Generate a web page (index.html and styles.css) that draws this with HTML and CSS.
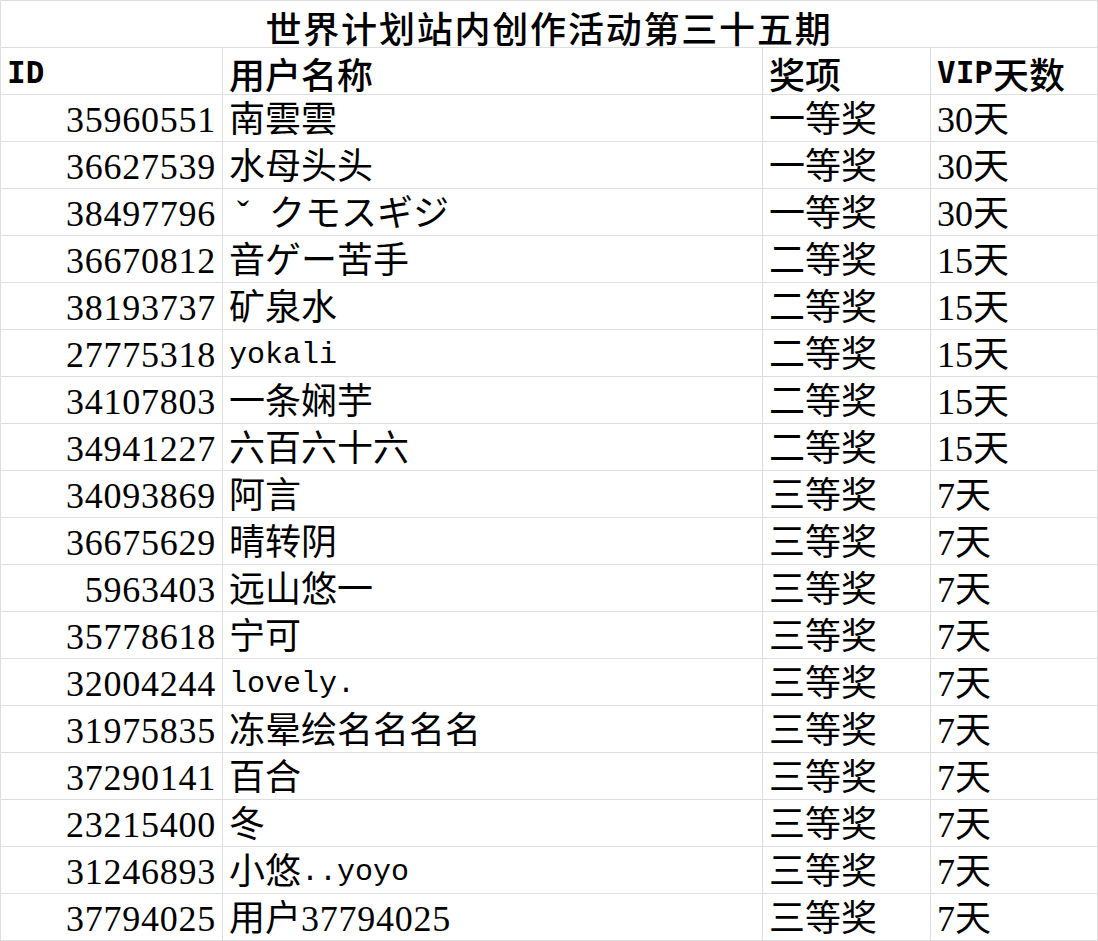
FILE: index.html
```html
<!DOCTYPE html>
<html lang="zh">
<head>
<meta charset="utf-8">
<title>世界计划站内创作活动第三十五期</title>
<link rel="stylesheet" href="styles.css">
</head>
<body>
<div class="sheet">
  <div class="cell title">世界计划站内创作活动第三十五期</div>

  <div class="cell head"><span class="hm">ID</span></div>
  <div class="cell head">用户名称</div>
  <div class="cell head">奖项</div>
  <div class="cell head"><span class="hm">VIP</span>天数</div>

  <div class="cell num">35960551</div><div class="cell">南雲雲</div><div class="cell">一等奖</div><div class="cell">30天</div>
  <div class="cell num">36627539</div><div class="cell">水母头头</div><div class="cell">一等奖</div><div class="cell">30天</div>
  <div class="cell num">38497796</div><div class="cell"><span class="caron">ˇ</span>クモスギジ</div><div class="cell">一等奖</div><div class="cell">30天</div>
  <div class="cell num">36670812</div><div class="cell">音ゲー苦手</div><div class="cell">二等奖</div><div class="cell">15天</div>
  <div class="cell num">38193737</div><div class="cell">矿泉水</div><div class="cell">二等奖</div><div class="cell">15天</div>
  <div class="cell num">27775318</div><div class="cell"><span class="mono">yokali</span></div><div class="cell">二等奖</div><div class="cell">15天</div>
  <div class="cell num">34107803</div><div class="cell">一条娴芋</div><div class="cell">二等奖</div><div class="cell">15天</div>
  <div class="cell num">34941227</div><div class="cell">六百六十六</div><div class="cell">二等奖</div><div class="cell">15天</div>
  <div class="cell num">34093869</div><div class="cell">阿言</div><div class="cell">三等奖</div><div class="cell">7天</div>
  <div class="cell num">36675629</div><div class="cell">晴转阴</div><div class="cell">三等奖</div><div class="cell">7天</div>
  <div class="cell num">5963403</div><div class="cell">远山悠一</div><div class="cell">三等奖</div><div class="cell">7天</div>
  <div class="cell num">35778618</div><div class="cell">宁可</div><div class="cell">三等奖</div><div class="cell">7天</div>
  <div class="cell num">32004244</div><div class="cell"><span class="mono">lovely.</span></div><div class="cell">三等奖</div><div class="cell">7天</div>
  <div class="cell num">31975835</div><div class="cell">冻晕绘名名名名</div><div class="cell">三等奖</div><div class="cell">7天</div>
  <div class="cell num">37290141</div><div class="cell">百合</div><div class="cell">三等奖</div><div class="cell">7天</div>
  <div class="cell num">23215400</div><div class="cell">冬</div><div class="cell">三等奖</div><div class="cell">7天</div>
  <div class="cell num">31246893</div><div class="cell">小悠<span class="mono">..yoyo</span></div><div class="cell">三等奖</div><div class="cell">7天</div>
  <div class="cell num">37794025</div><div class="cell">用户<span class="dig">37794025</span></div><div class="cell">三等奖</div><div class="cell">7天</div>
</div>
</body>
</html>
```

FILE: styles.css
```css
html, body {
  margin: 0;
  padding: 0;
  background: #ffffff;
}

.sheet {
  display: grid;
  grid-template-columns: 222px 540px 168px 167px;
  grid-auto-rows: 47px;
  width: 1097px;
  border-right: 1px solid #dedede;
  border-bottom: 1px solid #dedede;
  box-sizing: content-box;
  color: #000;
  font-family: "Liberation Serif", "Noto Sans CJK SC", serif;
  font-size: 36px;
}

.cell {
  box-sizing: border-box;
  border-top: 1px solid #dedede;
  border-left: 1px solid #dedede;
  display: flex;
  align-items: flex-end;
  padding: 0 6px 3px 6px;
  line-height: 36px;
  white-space: nowrap;
}

.num {
  justify-content: flex-end;
  letter-spacing: 0.75px;
}

.dig {
  letter-spacing: 0.75px;
}

.title {
  grid-column: 1 / -1;
  justify-content: center;
  padding-bottom: 2px;
  font-family: "Noto Sans CJK SC", sans-serif;
  font-size: 36px;
  font-weight: 500;
  letter-spacing: 1.8px;
}

.head {
  font-family: "Noto Sans CJK SC", sans-serif;
  font-weight: 500;
}

.hm {
  font-family: "DejaVu Sans Mono", monospace;
  font-size: 31px;
  font-weight: bold;
  padding-bottom: 1px;
}

.mono {
  font-family: "Liberation Mono", monospace;
  font-size: 30px;
}

.caron {
  display: inline-block;
  width: 40px;
  padding-left: 8px;
  box-sizing: border-box;
}
```
